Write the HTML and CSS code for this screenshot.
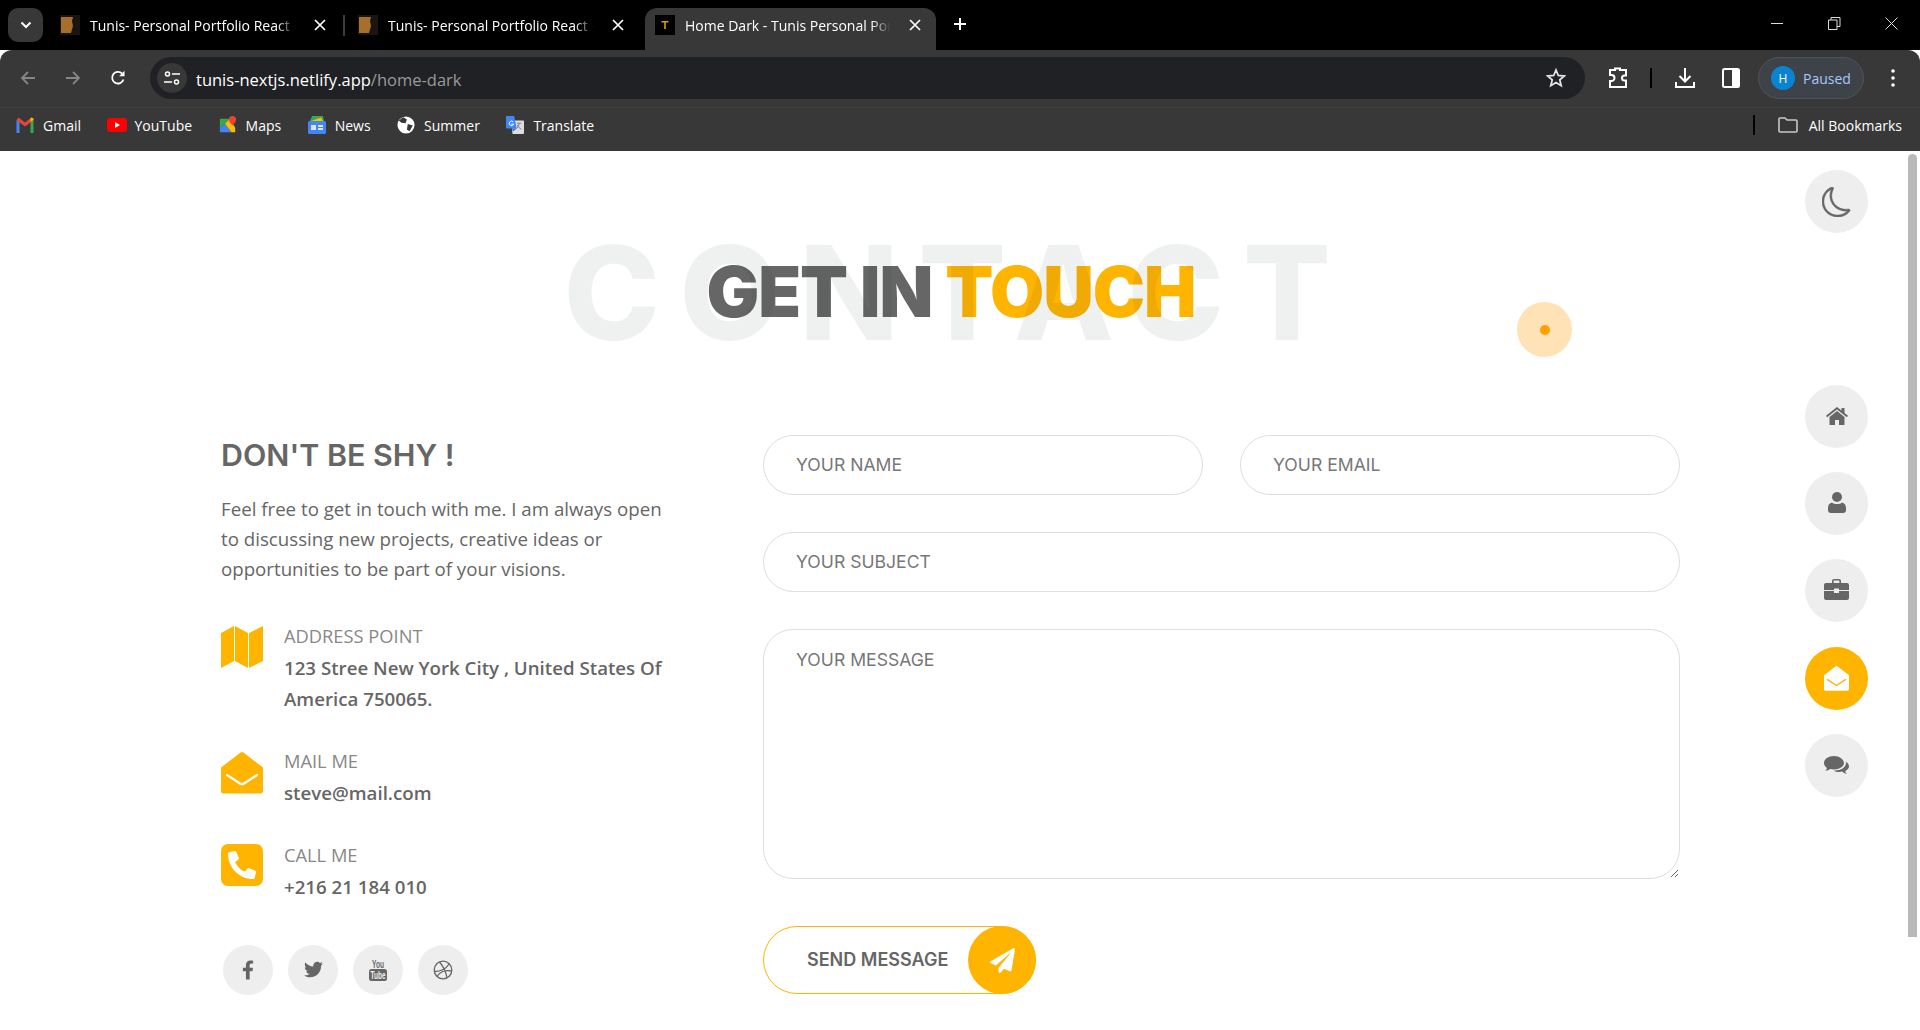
FILE: index.html
```html
<!DOCTYPE html>
<html lang="en">
<head>
  <meta charset="UTF-8">
  <title>Home Dark - Tunis Personal Portfolio</title>
  <link rel="stylesheet" href="styles.css">
</head>
<body>

  <!-- browser chrome -->
  <div class="tabstrip">
    <button class="tab-search"><svg width="12" height="8" viewBox="0 0 12 8"><path d="M1.5 1.5 6 6l4.5-4.5" fill="none" stroke="#fff" stroke-width="2"/></svg></button>
    <div class="tab">
      <svg class="favicon" viewBox="0 0 20 20"><rect width="20" height="20" fill="#1a1512"/><path d="M1 2h12l-1 4 1 5-2 7H1z" fill="#a5702c"/></svg>
      <span class="tab-title">Tunis- Personal Portfolio React - Next.js</span>
      <svg class="tab-x" viewBox="0 0 12 12"><path d="M1 1l10 10M11 1 1 11" stroke="#fff" stroke-width="1.7"/></svg>
    </div>
    <i class="tab-sep"></i>
    <div class="tab">
      <svg class="favicon" viewBox="0 0 20 20"><rect width="20" height="20" fill="#1a1512"/><path d="M1 2h12l-1 4 1 5-2 7H1z" fill="#a5702c"/></svg>
      <span class="tab-title">Tunis- Personal Portfolio React - Next.js</span>
      <svg class="tab-x" viewBox="0 0 12 12"><path d="M1 1l10 10M11 1 1 11" stroke="#fff" stroke-width="1.7"/></svg>
    </div>
    <div class="tab tab-active">
      <svg class="favicon" viewBox="0 0 20 20"><rect width="20" height="20" fill="#000"/><path d="M6.5 6h7v1.6h-2.7V14H9.2V7.600H6.500z" fill="#d6a10b"/></svg>
      <span class="tab-title">Home Dark - Tunis Personal Portfolio</span>
      <svg class="tab-x" viewBox="0 0 12 12"><path d="M1 1l10 10M11 1 1 11" stroke="#fff" stroke-width="1.7"/></svg>
    </div>
    <svg class="tab-plus" viewBox="0 0 14 14"><path d="M7 1v12M1 7h12" stroke="#fff" stroke-width="2"/></svg>
    <div class="win-controls">
      <svg width="13" height="13" viewBox="0 0 13 13"><path d="M0 6.500h12" stroke="#ddd"/></svg>
      <svg width="13" height="13" viewBox="0 0 13 13"><path d="M.5 3h8.500v9.500H.5zM3 3V.5h9v9H9" fill="none" stroke="#ddd"/></svg>
      <svg width="13" height="13" viewBox="0 0 13 13"><path d="M.5.5l12 12M12.500.5l-12 12" stroke="#ddd"/></svg>
    </div>
  </div>

  <div class="toolbar">
    <svg class="nav-icon" viewBox="0 0 16 16"><path d="M15 8H2M8 2 2 8l6 6" fill="none" stroke="#858585" stroke-width="1.800"/></svg>
    <svg class="nav-icon" viewBox="0 0 16 16"><path d="M1 8h13M8 2l6 6-6 6" fill="none" stroke="#858585" stroke-width="1.800"/></svg>
    <svg class="nav-icon" viewBox="0 0 16 16"><path d="M13.500 9.500A5.800 5.800 0 1 1 12 3.500" fill="none" stroke="#fff" stroke-width="1.800"/><path d="M14.500.8v5.400H9.100z" fill="#fff"/></svg>
    <div class="omnibox">
      <span class="site-chip"><svg width="16" height="14" viewBox="0 0 16 14"><circle cx="3.500" cy="3" r="2" fill="none" stroke="#fff" stroke-width="1.500"/><path d="M8 3h8M0 11h8" stroke="#fff" stroke-width="1.600"/><circle cx="12.500" cy="11" r="2" fill="none" stroke="#fff" stroke-width="1.500"/></svg></span>
      <span class="url">tunis-nextjs.netlify.app<span class="url-path">/home-dark</span></span>
      <svg class="star" viewBox="0 0 20 20"><path d="M10 2l2.300 5.500 6 .5-4.500 3.900 1.400 5.800L10 14.600l-5.200 3.100 1.400-5.800L1.700 8l6-.5z" fill="none" stroke="#e3e3e3" stroke-width="1.800"/></svg>
    </div>
    <svg class="tool-icon ext" viewBox="0 0 20 22"><path d="M7 3V1.500h5V3h6v5.500h-1.500a2.500 2.500 0 0 0 0 5H18V20H2v-6h1.500a3 3 0 0 0 0-6H2V3z" fill="none" stroke="#fff" stroke-width="2"/></svg>
    <i class="tool-sep"></i>
    <svg class="tool-icon" viewBox="0 0 20 22"><path d="M10 1v13M4.500 9l5.500 5.500L15.500 9M1 15v5h18v-5" fill="none" stroke="#fff" stroke-width="2"/></svg>
    <svg class="tool-icon side" viewBox="0 0 18 20"><rect x="1" y="1" width="16" height="18" rx="1.500" fill="none" stroke="#fff" stroke-width="2"/><rect x="10" y="1" width="7" height="18" fill="#fff"/></svg>
    <div class="profile"><span class="avatar">H</span><span>Paused</span></div>
    <svg class="kebab" viewBox="0 0 4 18"><circle cx="2" cy="2" r="1.800" fill="#fff"/><circle cx="2" cy="9" r="1.800" fill="#fff"/><circle cx="2" cy="16" r="1.800" fill="#fff"/></svg>
  </div>

  <div class="bookmarks">
    <a class="bm">
      <svg viewBox="0 0 20 16"><path d="M1.500 16V3l3 2v11z" fill="#4285f4"/><path d="M15.500 16V5l3-2v13z" fill="#34a853"/><path d="M1.500 3.200 10 9.500l8.500-6.300-2-2.700L10 5.500 3.500.5z" fill="#ea4335"/><path d="M15.500 5l3-2V1.500l-2-1-1 .8z" fill="#fbbc04"/></svg>
      Gmail</a>
    <a class="bm">
      <svg viewBox="0 0 20 14"><rect width="20" height="14" rx="3.500" fill="#f00"/><path d="M8 4l5 3-5 3z" fill="#fff"/></svg>
      YouTube</a>
    <a class="bm">
      <svg viewBox="0 0 18 20"><path d="M0 3h11l-11 11z" fill="#34a853"/><path d="M0 14 5.500 8.500 13 18H0z" fill="#4285f4"/><path d="M5.500 8.500 11 3l6 10v5h-4z" fill="#fbbc04"/><path d="M14 0a4 4 0 0 0-4 4c0 2.800 4 6.500 4 6.500S18 6.800 18 4a4 4 0 0 0-4-4z" fill="#ea4335"/></svg>
      Maps</a>
    <a class="bm">
      <svg viewBox="0 0 18 18"><path d="M2 5 4 0h11l1 5z" fill="#34a853"/><path d="M3 5 13 1.500 15 5z" fill="#fbbc04"/><rect y="5" width="18" height="13" rx="1.500" fill="#4285f4"/><rect x="3" y="9" width="5" height="5" fill="#dbe6fb"/><rect x="10" y="9" width="5" height="2" fill="#dbe6fb"/><rect x="10" y="12" width="5" height="2" fill="#dbe6fb"/></svg>
      News</a>
    <a class="bm">
      <svg viewBox="0 0 20 20"><circle cx="10" cy="10" r="9.500" fill="#fff"/><path d="M7 1.500 11 4 9.500 8 5 7.500 2 5zM12 9l5.500 1.500L14 17l-3-2z" fill="#383838"/></svg>
      Summer</a>
    <a class="bm">
      <svg viewBox="0 0 20 20"><rect x="7" y="5" width="13" height="15" rx="1" fill="#ddd"/><path d="M12 8h5M14.500 8c0 3-1.500 5-3 6M12.500 10c1 2 3 4 4.500 4.500" fill="none" stroke="#777"/><path d="M1 0h8l3 14H1.500A1.500 1.500 0 0 1 0 12.500V1a1 1 0 0 1 1-1z" fill="#4285f4"/><path d="M8 17l4-3H7z" fill="#3367d6"/><path d="M8 6.500a2.500 2.500 0 1 0 .5 2.500H6" fill="none" stroke="#fff" stroke-width="1.100"/></svg>
      Translate</a>
    <i class="bm-sep"></i>
    <a class="bm bm-all">
      <svg viewBox="0 0 20 16"><path d="M1 14V2a1 1 0 0 1 1-1h5l2 2h9a1 1 0 0 1 1 1v10a1 1 0 0 1-1 1H2a1 1 0 0 1-1-1z" fill="none" stroke="#c7c7c7" stroke-width="1.600"/></svg>
      All Bookmarks</a>
  </div>

  <!-- the page -->
  <div class="page">
    <main class="content">
      <div class="title-wrap">
        <h1 class="title">GET IN <span class="accent">TOUCH</span></h1>
        <span class="title-bg">CONTACT</span>
      </div>

      <div class="columns">
        <section class="info">
          <h2>DON'T BE SHY !</h2>
          <p class="intro">Feel free to get in touch with me. I am always open to discussing new projects, creative ideas or opportunities to be part of your visions.</p>

          <div class="info-row">
            <svg class="info-icon" viewBox="0 0 42 42"><path d="M0 7 13 0v35L0 42zM14 0l13 7v35l-13-7zM28 7 42 0v35l-14 7z" fill="#ffb400"/></svg>
            <div>
              <div class="info-label">ADDRESS POINT</div>
              <div class="info-value">123 Stree New York City , United States Of America 750065.</div>
            </div>
          </div>
          <div class="info-row">
            <svg class="info-icon info-icon-mail" viewBox="0 0 42 42"><path d="M19.500.6a2.500 2.500 0 0 1 3 0L42 15.500V39a2.500 2.500 0 0 1-2.500 2.500h-37A2.500 2.500 0 0 1 0 39V15.500z" fill="#ffb400"/><path d="M6 23l13 8.500a3.500 3.500 0 0 0 4 0L36 23" fill="none" stroke="#fff" stroke-width="2.200" stroke-linecap="round"/></svg>
            <div>
              <div class="info-label">MAIL ME</div>
              <div class="info-value">steve@mail.com</div>
            </div>
          </div>
          <div class="info-row">
            <svg class="info-icon info-icon-call" viewBox="0 0 42 42"><rect width="42" height="42" rx="7" fill="#ffb400"/><path transform="translate(7 7) scale(.0547)" d="M497.390 361.800l-112-48a24 24 0 0 0-28 6.900l-49.600 60.600A370.660 370.660 0 0 1 130.600 204.110l60.600-49.600a23.940 23.940 0 0 0 6.900-28l-48-112A24.160 24.160 0 0 0 122.600.61l-104 24A24 24 0 0 0 0 48c0 256.500 207.900 464 464 464a24 24 0 0 0 23.400-18.600l24-104a24.290 24.290 0 0 0-14.010-27.600z" fill="#fff"/></svg>
            <div>
              <div class="info-label">CALL ME</div>
              <div class="info-value">+216 21 184 010</div>
            </div>
          </div>

          <div class="socials">
            <a class="social"><svg width="12" height="20" viewBox="0 0 320 512"><path d="M279.140 288l14.220-92.660h-88.910v-60.130c0-25.350 12.420-50.060 52.240-50.060h40.420V6.260S260.430 0 225.360 0c-73.220 0-121.080 44.380-121.080 124.720v70.620H22.890V288h81.390v224h100.170V288z" fill="#666"/></svg></a>
            <a class="social"><svg width="19" height="19" viewBox="0 0 512 512"><path d="M459.370 151.716c.325 4.548.325 9.097.325 13.645 0 138.720-105.583 298.558-298.558 298.558-59.452 0-114.680-17.219-161.137-47.106 8.447.974 16.568 1.299 25.340 1.299 49.055 0 94.213-16.568 130.274-44.832-46.132-.975-84.792-31.188-98.112-72.772 6.498.974 12.995 1.624 19.818 1.624 9.421 0 18.843-1.300 27.614-3.573-48.081-9.747-84.143-51.980-84.143-102.985v-1.299c13.969 7.797 30.214 12.670 47.431 13.319-28.264-18.843-46.781-51.005-46.781-87.391 0-19.492 5.197-37.360 14.294-52.954 51.655 63.675 129.300 105.258 216.365 109.807-1.624-7.797-2.599-15.918-2.599-24.040 0-57.828 46.782-104.934 104.934-104.934 30.213 0 57.502 12.670 76.670 33.137 23.715-4.548 46.456-13.320 66.599-25.340-7.798 24.366-24.366 44.833-46.132 57.827 21.117-2.273 41.584-8.122 60.426-16.243-14.292 20.791-32.161 39.308-52.628 54.253z" fill="#666"/></svg></a>
            <a class="social"><svg width="18" height="22" viewBox="0 0 18 22"><text class="yt-you" x="3" y="8.500" textLength="12" lengthAdjust="spacingAndGlyphs">You</text><rect y="10" width="18" height="12" rx="2.500" fill="#666"/><text class="yt-tube" x="1.500" y="20" textLength="15" lengthAdjust="spacingAndGlyphs">Tube</text></svg></a>
            <a class="social"><svg width="20" height="20" viewBox="0 0 20 20"><g fill="none" stroke="#666" stroke-width="1.300"><circle cx="10" cy="10" r="8.800"/><path d="M6.500 2C10 6 13 12 14 18M1.500 11.500C7 11.500 13 9 16 4M4 16.500C6.500 12 12 9.500 18.800 11"/></g></svg></a>
          </div>
        </section>

        <form class="contact-form">
          <div class="form-row">
            <input type="text" placeholder="YOUR NAME">
            <input type="email" placeholder="YOUR EMAIL">
          </div>
          <input type="text" placeholder="YOUR SUBJECT">
          <textarea placeholder="YOUR MESSAGE"></textarea>
          <button type="button" class="send">
            <span class="send-label">SEND MESSAGE</span>
            <span class="send-icon"><svg width="25" height="25" viewBox="0 0 512 512"><path d="M476 3.200L12.500 270.600c-18.100 10.400-15.800 35.600 2.200 43.200L121 358.400l287.300-253.200c5.500-4.900 13.300 2.600 8.600 8.300L176 407v80.500c0 23.600 28.500 32.900 42.500 15.800L282 426l124.600 52.200c14.200 6 30.400-2.900 33-18.200l72-432C515 7.800 493.300-6.800 476 3.200z" fill="#fff"/></svg></span>
          </button>
        </form>
      </div>
    </main>

    <aside class="rail">
      <a class="rail-btn"><svg width="30" height="30" viewBox="0 0 16 16"><path d="M6 .278a.768.768 0 0 1 .08.858 7.208 7.208 0 0 0-.878 3.460c0 4.021 3.278 7.277 7.318 7.277.527 0 1.040-.055 1.533-.16a.787.787 0 0 1 .81.316.733.733 0 0 1-.031.893A8.349 8.349 0 0 1 8.344 16C3.734 16 0 12.286 0 7.710 0 4.266 2.114 1.312 5.124.06A.752.752 0 0 1 6 .278zM4.858 1.311A7.269 7.269 0 0 0 1.025 7.710c0 4.020 3.279 7.276 7.319 7.276a7.316 7.316 0 0 0 5.205-2.162c-.337.042-.68.063-1.029.063-4.610 0-8.343-3.714-8.343-8.290 0-1.167.242-2.278.681-3.286z" fill="#666" stroke="#666" stroke-width=".25"/></svg></a>
      <nav class="rail-nav">
        <a class="rail-btn"><svg class="icon-up" width="22" height="18" viewBox="0 0 22 18"><path d="M11 0 0 8.800l1.200 1.500L11 2.500l9.800 7.800L22 8.800l-3.500-2.800V1h-3v2.600z" fill="#666"/><path d="M11 4 3.500 10v8H9v-5h4v5h5.500v-8z" fill="#666"/></svg></a>
        <a class="rail-btn"><svg class="icon-up" width="18" height="21" viewBox="0 0 18 21"><circle cx="9" cy="5" r="5" fill="#666"/><path d="M4 10.500c1 1 3 1.500 5 1.500s4-.5 5-1.500c2.500.5 4 2.500 4 5.500v2a3 3 0 0 1-3 3H3a3 3 0 0 1-3-3v-2c0-3 1.500-5 4-5.500z" fill="#666"/></svg></a>
        <a class="rail-btn"><svg class="icon-up" width="25" height="21" viewBox="0 0 25 21"><path d="M8 5V2a2 2 0 0 1 2-2h5a2 2 0 0 1 2 2v3h-1.600V2a.4.4 0 0 0-.4-.4h-5a.4.4 0 0 0-.4.4v3z" fill="#666"/><path d="M2 4h21a2 2 0 0 1 2 2v5H15v-1.500h-5V11H0V6a2 2 0 0 1 2-2z" fill="#666"/><path d="M0 12h10v2h5v-2h10v7a2 2 0 0 1-2 2H2a2 2 0 0 1-2-2z" fill="#666"/></svg></a>
        <a class="rail-btn rail-active"><svg width="25" height="25" viewBox="0 0 42 42"><path d="M19.500.6a2.500 2.500 0 0 1 3 0L42 15.500V39a2.500 2.500 0 0 1-2.500 2.500h-37A2.500 2.500 0 0 1 0 39V15.500z" fill="#fff"/><path d="M6 23l13 8.500a3.500 3.500 0 0 0 4 0L36 23" fill="none" stroke="#ffb400" stroke-width="2.500" stroke-linecap="round"/></svg></a>
        <a class="rail-btn"><svg width="25" height="20" viewBox="0 0 25 20"><path d="M10 0C4.500 0 0 3 0 7c0 2 1.200 3.800 3 5-.3 1.200-1 2-1.800 2.800 1.800 0 3.500-.7 5-1.700 1.200.3 2.500.4 3.800.4 5.500 0 10-3 10-6.500S15.500 0 10 0z" fill="#666"/><path d="M21.700 5.500c.2.500.3 1 .3 1.500 0 4.500-5.200 7.500-11 7.500h-1.200c1.500 1 3.400 1.500 5.200 1.500 1 0 2-.1 3-.4 1.300 1.200 3 2.200 4.800 2.400-.8-.8-1.400-1.800-1.600-3C23.800 13.800 25 12 25 10.500c0-2-1.300-3.800-3.300-5z" fill="#666"/></svg></a>
      </nav>
    </aside>

    <div class="scrollbar"></div>

    <span class="cursor-ring"><i></i></span>
  </div>

</body>
</html>
```

FILE: styles.css
```css
* {
  box-sizing: border-box;
}
html,
body {
  margin: 0;
  height: 1030px;
  overflow: hidden;
  background: #fff;
}
body {
  font-family: "Open Sans", sans-serif;
  color: #666;
}
a {
  text-decoration: none;
}

/* tab strip */
.tabstrip {
  display: flex;
  align-items: flex-end;
  height: 50px;
  padding-left: 8px;
  background: #000;
  color: #fff;
}
.tab-search {
  align-self: flex-start;
  display: flex;
  align-items: center;
  justify-content: center;
  width: 35px;
  height: 34px;
  margin-top: 8px;
  margin-right: 7px;
  padding: 0;
  border: none;
  border-radius: 10px;
  background: #383838;
}
.tab {
  display: flex;
  align-items: center;
  width: 294px;
  height: 42px;
  padding: 0 18px 8px 10px;
  font-size: 14px;
}
.tab-active {
  width: 291px;
  margin-left: 3px;
  padding-right: 15px;
  border-radius: 12px 12px 0 0;
  background: #383838;
}
.favicon {
  flex: none;
  width: 20px;
  height: 20px;
  margin-right: 10px;
}
.tab-title {
  flex: 1;
  overflow: hidden;
  white-space: nowrap;
  -webkit-mask-image: linear-gradient(90deg, #000 88%, transparent 97%);
  mask-image: linear-gradient(90deg, #000 88%, transparent 97%);
}
.tab-x {
  flex: none;
  width: 12px;
  height: 12px;
  margin-left: 12px;
}
.tab-sep {
  align-self: flex-start;
  width: 2px;
  height: 21px;
  margin: 15px 3px 0 -1px;
  background: #3c3c3c;
}
.tab-plus {
  align-self: flex-start;
  width: 14px;
  height: 14px;
  margin: 17px 0 0 17px;
}
.win-controls {
  align-self: flex-start;
  display: flex;
  gap: 44px;
  margin: 17px 22px 0 auto;
}

/* toolbar */
.toolbar {
  display: flex;
  align-items: center;
  height: 58px;
  padding: 0 0 1px 20px;
  border-radius: 12px 12px 0 0;
  border-bottom: 1px solid #3e3e3e;
  background: #383838;
}
.nav-icon {
  flex: none;
  width: 16px;
  height: 16px;
  margin-right: 29px;
}
.omnibox {
  display: flex;
  align-items: center;
  width: 1435px;
  height: 42px;
  margin-left: -5px;
  padding: 0 19px 0 7px;
  border-radius: 21px;
  background: #202124;
}
.site-chip {
  display: flex;
  align-items: center;
  justify-content: center;
  width: 30px;
  height: 30px;
  margin-right: 9px;
  border-radius: 50%;
  background: #383838;
}
.url {
  flex: 1;
  padding-top: 3px;
  font-size: 16.5px;
  color: #fff;
}
.url-path {
  color: #9a9a9a;
}
.star {
  width: 20px;
  height: 20px;
}
.tool-icon {
  flex: none;
  width: 20px;
  height: 22px;
}
.ext {
  margin-left: 23px;
}
.tool-sep {
  width: 2px;
  height: 20px;
  margin: 0 23px 0 22px;
  background: #000;
}
.side {
  width: 18px;
  height: 20px;
  margin-left: 27px;
}
.profile {
  display: flex;
  align-items: center;
  gap: 8px;
  width: 106px;
  height: 42px;
  margin-left: 18px;
  padding-left: 12px;
  border: 1px solid #4e5359;
  border-radius: 21px;
  background: #3e434a;
  font-size: 14px;
  color: #a8c7fa;
}
.avatar {
  display: flex;
  align-items: center;
  justify-content: center;
  width: 24px;
  height: 24px;
  border-radius: 50%;
  background: #0a84d0;
  font-size: 12px;
  color: #fff;
}
.kebab {
  width: 4px;
  height: 18px;
  margin-left: 27px;
}

/* bookmarks bar */
.bookmarks {
  display: flex;
  align-items: center;
  gap: 25.5px;
  height: 43px;
  padding: 0 18px 9px 15px;
  background: #383838;
  font-size: 14px;
  color: #fff;
}
.bm {
  display: flex;
  align-items: center;
  gap: 8px;
}
.bm svg {
  width: 20px;
  height: 18px;
}
.bm-sep {
  width: 2px;
  height: 20px;
  margin-left: auto;
  background: #000;
}
.bm-all {
  gap: 11px;
  margin-left: -3px;
}

/* page */
.page {
  position: relative;
  display: flex;
  height: 879px;
  overflow: hidden;
}
.content {
  flex: none;
  width: 1460px;
  margin-left: 221px;
}
.title-wrap {
  position: relative;
  height: 284px;
  padding-top: 103px;
  text-align: center;
}
.title {
  margin: 0;
  font-family: Inter, sans-serif;
  font-size: 70px;
  font-weight: 900;
  line-height: 76px;
  letter-spacing: -1px;
  color: #666;
}
.accent {
  color: #ffb400;
}
.title-bg {
  position: absolute;
  top: 62px;
  left: 6px;
  width: 100%;
  font-family: Inter, sans-serif;
  font-size: 130px;
  font-weight: 800;
  line-height: 160px;
  letter-spacing: 19.3px;
  color: rgba(30, 37, 48, 0.07);
  pointer-events: none;
}
.columns {
  display: grid;
  grid-template-columns: 542px 917px;
}

/* left column */
.info h2 {
  margin: 0 0 19px;
  font-family: Inter, sans-serif;
  font-size: 30.4px;
  font-weight: 600;
  line-height: 40px;
  color: #666;
}
.intro {
  width: 450px;
  margin: 0 0 36px;
  font-size: 18.7px;
  line-height: 30px;
}
.info-row {
  display: flex;
  align-items: flex-start;
  gap: 21px;
  width: 470px;
  margin-bottom: 31.5px;
}
.info-icon {
  flex: none;
  width: 42px;
  height: 42px;
  margin-top: 6px;
}
.info-icon-mail {
  margin-top: 7px;
}
.info-icon-call {
  margin-top: 5px;
}
.info-label {
  font-size: 18.3px;
  line-height: 31.5px;
  color: #888;
}
.info-value {
  font-size: 18.7px;
  font-weight: 600;
  line-height: 31px;
}
.socials {
  display: flex;
  gap: 15px;
  margin: 43px 0 0 2px;
}
.social {
  display: flex;
  align-items: center;
  justify-content: center;
  width: 50px;
  height: 50px;
  border-radius: 50%;
  background: #eee;
}
.yt-you,
.yt-tube {
  font-family: "Liberation Sans", sans-serif;
  font-size: 11px;
  font-weight: 700;
  fill: #666;
}
.yt-tube {
  fill: #eee;
}

/* form */
.contact-form {
  display: flex;
  flex-direction: column;
  align-items: flex-start;
  gap: 37px;
  padding-right: 0;
}
.form-row {
  display: flex;
  gap: 37px;
  width: 100%;
}
.contact-form input,
.contact-form textarea {
  display: block;
  width: 100%;
  height: 60px;
  padding: 0 32px 2px;
  border: 1px solid #ddd;
  border-radius: 30px;
  background: #fff;
  font-family: Inter, sans-serif;
  font-size: 17.6px;
  color: #666;
  outline: none;
}
.contact-form textarea {
  height: 250px;
  padding: 17px 32px;
  line-height: 26px;
}
.contact-form ::placeholder {
  color: #777;
  opacity: 1;
}
.send {
  display: flex;
  align-items: center;
  justify-content: space-between;
  width: 273px;
  height: 68px;
  margin-top: 10px;
  padding: 0 0 0 43px;
  border: 1px solid #ffb400;
  border-radius: 34px;
  background: #fff;
  font-family: Inter, sans-serif;
  font-size: 18px;
  font-weight: 600;
  color: #666;
}
.send-label {
  padding-bottom: 2px;
}
.send-icon {
  display: flex;
  align-items: center;
  justify-content: center;
  width: 68px;
  height: 68px;
  margin-right: -1px;
  border-radius: 50%;
  background: #ffb400;
}

/* right rail */
.rail {
  flex: none;
  width: 63px;
  margin: 19px 0 0 124px;
}
.rail-nav {
  display: flex;
  flex-direction: column;
  gap: 24px;
  margin-top: 152px;
}
.rail-btn {
  display: flex;
  align-items: center;
  justify-content: center;
  width: 63px;
  height: 63px;
  border-radius: 50%;
  background: #eee;
}
.icon-up {
  margin-bottom: 2px;
}
.rail-active {
  margin-top: 1px;
  background: #ffb400;
}
.scrollbar {
  flex: none;
  width: 9px;
  height: 783px;
  margin: 3px 0 0 40px;
  border-radius: 5px 5px 0 0;
  background: #b9b9b9;
}

/* the pointer follower */
.cursor-ring {
  position: absolute;
  top: 151px;
  left: 1517px;
  display: flex;
  align-items: center;
  justify-content: center;
  width: 55px;
  height: 55px;
  border-radius: 50%;
  background: #ffe2b5;
}
.cursor-ring i {
  width: 10px;
  height: 10px;
  border-radius: 50%;
  background: #ffa000;
}
```
